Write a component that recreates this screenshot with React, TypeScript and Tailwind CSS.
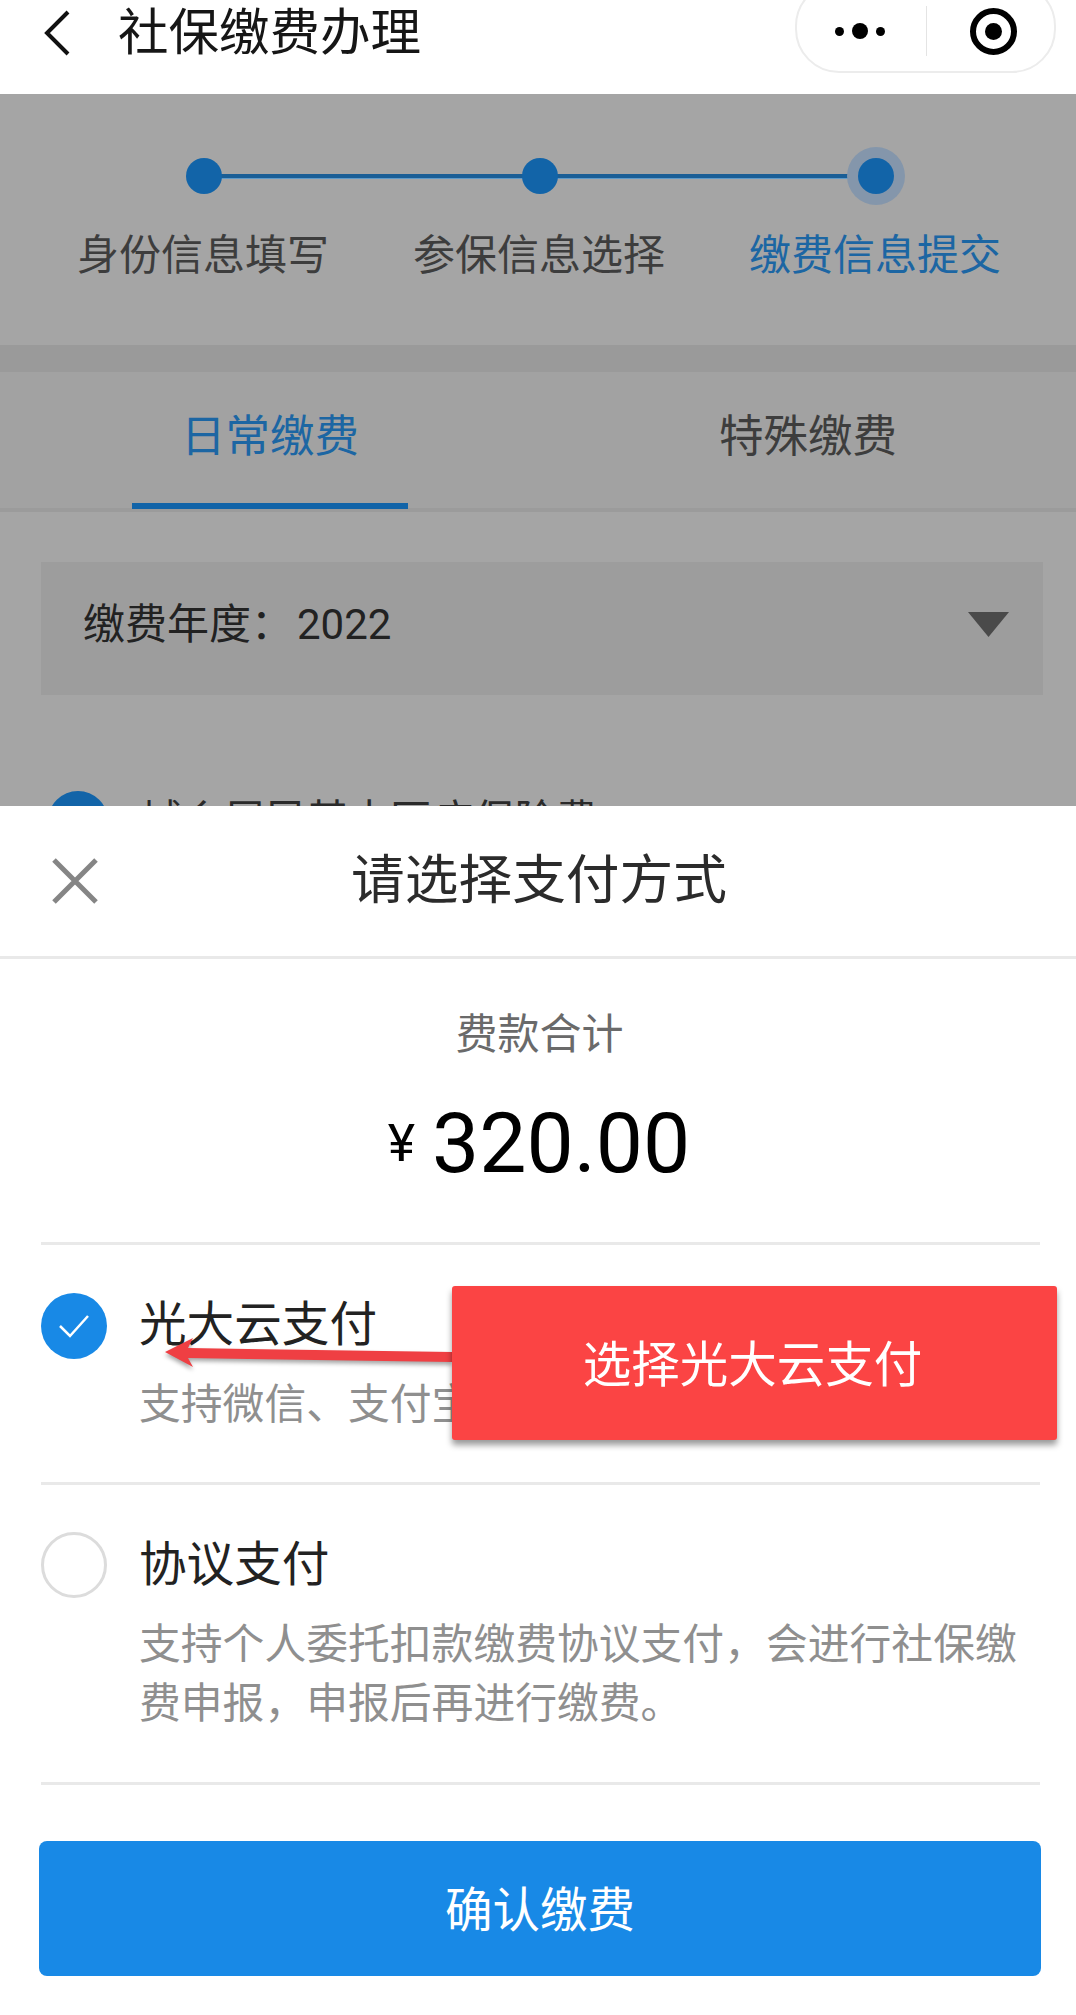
const font = "font-['Roboto','Noto_Sans_CJK_SC',sans-serif]";

function Step({ label, active }: { label: string; active?: boolean }) {
  return (
    <div className={`w-[336px] text-center text-[42px] leading-[60px] ${active ? 'text-[#1c66a3]' : 'text-[#3d3d3d]'}`}>
      {label}
    </div>
  );
}

function Option({
  checked,
  title,
  lines,
  className,
}: {
  checked?: boolean;
  title: string;
  lines: string[];
  className: string;
}) {
  return (
    <div className={`flex gap-[32px] border-b-[3px] border-[#e9e9e9] ${className}`}>
      {checked ? (
        <div className="mt-[48px] flex h-[66px] w-[66px] shrink-0 items-center justify-center rounded-full bg-[#1889e6]">
          <svg width="34" height="26" viewBox="0 0 34 26" fill="none" stroke="#fff" strokeWidth="2.5">
            <path d="M3 13l10 10L31 3" />
          </svg>
        </div>
      ) : (
        <div className="mt-[47px] h-[66px] w-[66px] shrink-0 rounded-full border-[3px] border-[#dcdcdc]" />
      )}
      <div className="mt-[47px]">
        <div className="text-[47.6px] leading-[66px] text-[#222]">{title}</div>
        <div className="mt-[17px] text-[41.8px] leading-[59px] text-[#8f8f8f]">
          {lines.map((l) => (
            <div key={l} className="whitespace-nowrap">{l}</div>
          ))}
        </div>
      </div>
    </div>
  );
}

export default function App() {
  return (
    <div className={`relative flex h-[2015px] w-[1076px] flex-col overflow-hidden bg-white ${font}`}>
      {/* Nav bar */}
      <header className="relative flex h-[94px] shrink-0 items-center bg-white pb-[28px]">
        <svg className="ml-[43px] shrink-0" width="28" height="46" viewBox="0 0 28 46" fill="none" stroke="#111" strokeWidth="4">
          <path d="M25 2L4 23l21 21" />
        </svg>
        <h1 className="ml-[47px] text-[50.5px] font-normal leading-none text-[#161616]">社保缴费办理</h1>
        <div className="absolute right-[20px] top-[-18px] flex h-[91px] w-[261px] items-center rounded-[44px] border-2 border-[#ececec] bg-white pt-[7px]">
          <div className="flex w-[129px] items-center justify-center gap-[8px] pr-[3px]">
            <span className="h-[9px] w-[9px] rounded-full bg-black" />
            <span className="h-[16px] w-[16px] rounded-full bg-black" />
            <span className="h-[9px] w-[9px] rounded-full bg-black" />
          </div>
          <div className="h-[50px] w-px bg-[#e4e4e4]" />
          <div className="flex flex-1 justify-center pl-[6px]">
            <div className="flex h-[47px] w-[47px] items-center justify-center rounded-full border-[6px] border-black">
              <span className="h-[17px] w-[17px] rounded-full bg-black" />
            </div>
          </div>
        </div>
      </header>

      {/* Dimmed page */}
      <main className="h-[712px] shrink-0 overflow-hidden bg-[#a5a5a5]">
        <div className="relative ml-[186px] mt-[64px] flex h-[36px] w-[708px] items-center justify-between">
          <div className="absolute inset-x-[18px] top-[16px] h-[5px] border-b border-[#5f9ac9] bg-[#1a5e96]" />
          <span className="relative h-[36px] w-[36px] rounded-full bg-[#1264a8]" />
          <span className="relative h-[36px] w-[36px] rounded-full bg-[#1264a8]" />
          <span className="relative h-[36px] w-[36px] rounded-full bg-[#1264a8] shadow-[0_0_0_11px_#8496ab]" />
        </div>
        <div className="mt-[32px] flex justify-center pl-[2px]">
          <Step label="身份信息填写" />
          <Step label="参保信息选择" />
          <Step label="缴费信息提交" active />
        </div>
        <div className="mt-[59px] h-[27px] bg-[#9a9a9a]" />
        <div className="flex h-[140px] border-b-[4px] border-[#9b9b9b] bg-[#a2a2a2]">
          <div className="relative flex w-[540px] justify-center pt-[35px] text-[44.5px] leading-[60px] text-[#1c66a3]">
            日常缴费
            <div className="absolute bottom-[-1px] left-[132px] h-[6px] w-[276px] bg-[#1264a8]" />
          </div>
          <div className="flex flex-1 justify-center pt-[35px] text-[44.5px] leading-[60px] text-[#3d3d3d]">特殊缴费</div>
        </div>
        <div className="ml-[41px] mr-[33px] mt-[50px] flex h-[133px] items-center justify-between bg-[#9d9d9d] pb-[8px] pl-[42px] pr-[34px]">
          <span className="text-[42px] leading-[60px] text-[#222]">
            缴费年度：<span className="ml-[4px]">2022</span>
          </span>
          <svg width="41" height="25" viewBox="0 0 41 25" fill="#4a4a4a">
            <path d="M0 0h41L20.5 25z" />
          </svg>
        </div>
        <div className="ml-[48px] mt-[96px] flex items-start gap-[33px]">
          <span className="h-[60px] w-[60px] shrink-0 rounded-full bg-[#1264a8]" />
          <span className="text-[41.5px] leading-[60px] text-[#2a2a2a]">城乡居民基本医疗保险费</span>
        </div>
      </main>

      {/* Payment sheet */}
      <section className="flex flex-1 flex-col bg-white">
        <div className="relative flex h-[153px] shrink-0 items-center justify-center border-b-[3px] border-[#e9e9e9]">
          <svg className="absolute left-[52px] top-[52px]" width="46" height="46" viewBox="0 0 46 46" fill="none" stroke="#858585" strokeWidth="5">
            <path d="M2 2l42 42M44 2L2 44" />
          </svg>
          <h2 className="pl-[2px] text-[53.7px] font-normal leading-none text-[#2b2b2b]">请选择支付方式</h2>
        </div>
        <div className="mt-[46px] pl-[3px] text-center text-[42px] leading-[60px] text-[#6a6a6a]">费款合计</div>
        <div className="mt-[29px] flex items-center justify-center gap-[17px] pl-[2px] text-black">
          <span className="text-[52px] leading-none">¥</span>
          <span className="text-[84px] leading-[100px]">320.00</span>
        </div>
        <div className="ml-[41px] mr-[36px] mt-[48px] flex flex-col border-t-[3px] border-[#e9e9e9]">
          <Option checked title="光大云支付" lines={['支持微信、支付宝']} className="h-[240px]" />
          <Option title="协议支付" lines={['支持个人委托扣款缴费协议支付，会进行社保缴', '费申报，申报后再进行缴费。']} className="h-[300px]" />
        </div>
        <button className="ml-[39px] mr-[35px] mt-[56px] flex h-[135px] items-center justify-center rounded-[8px] bg-[#1889e6] pt-[6px] text-[47.5px] text-white">
          确认缴费
        </button>
      </section>

      {/* Annotation */}
      <svg className="absolute left-[160px] top-[1335px] drop-shadow-[0_3px_2px_rgba(0,0,0,0.35)]" width="300" height="40" viewBox="0 0 300 40" fill="#ef3f43">
        <path d="M5 17L33 3l-5 10 264 4v10L28 23l5 9z" />
      </svg>
      <div className="absolute left-[452px] top-[1286px] flex h-[154px] w-[605px] items-center justify-center rounded-[3px] bg-[#fb4444] pr-[4px] pt-[6px] text-[48.5px] text-white shadow-[0_5px_6px_rgba(0,0,0,0.4)]">
        选择光大云支付
      </div>
    </div>
  );
}
